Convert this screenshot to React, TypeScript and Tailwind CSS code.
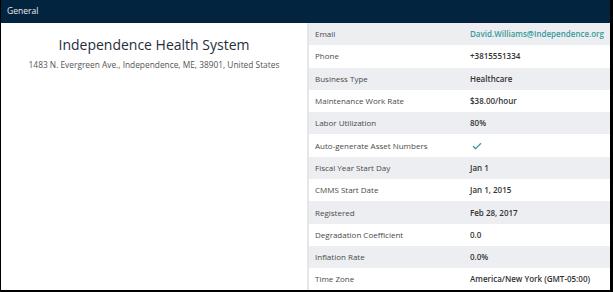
const rows: { label: string; value: string; kind?: 'email' | 'check' }[] = [
  { label: 'Email', value: 'David.Williams@Independence.org', kind: 'email' },
  { label: 'Phone', value: '+3815551334' },
  { label: 'Business Type', value: 'Healthcare' },
  { label: 'Maintenance Work Rate', value: '$38.00/hour' },
  { label: 'Labor Utilization', value: '80%' },
  { label: 'Auto-generate Asset Numbers', value: '', kind: 'check' },
  { label: 'Fiscal Year Start Day', value: 'Jan 1' },
  { label: 'CMMS Start Date', value: 'Jan 1, 2015' },
  { label: 'Registered', value: 'Feb 28, 2017' },
  { label: 'Degradation Coefficient', value: '0.0' },
  { label: 'Inflation Rate', value: '0.0%' },
  { label: 'Time Zone', value: 'America/New York (GMT-05:00)' },
];

export default function App() {
  return (
    <div
      className="w-[613px] h-[292px] bg-white border-l border-r-[3px] border-b-2 border-black flex flex-col overflow-hidden"
      style={{ fontFamily: '"Open Sans", sans-serif' }}
    >
      <div className="h-[23px] shrink-0 bg-[#03243f] text-[#e8edf2] text-[8.5px] flex items-center px-[6px]">
        General
      </div>
      <div className="flex flex-1 border-b border-[#d4d4d4]">
        <div className="w-[306px] flex flex-col items-center pt-[13px]">
          <div className="text-[14px] text-[#1f2d3d] leading-tight">Independence Health System</div>
          <div className="text-[8.35px] text-[#555] mt-[5px]">
            1483 N. Evergreen Ave., Independence, ME, 38901, United States
          </div>
        </div>
        <div className="w-[2px] bg-[#e4e6ea]" />
        <div className="flex-1 flex flex-col">
          {rows.map((r, i) => (
            <div
              key={r.label}
              className={`h-[22.3px] flex items-center text-[8px] ${i % 2 === 0 ? 'bg-[#eceef1]' : 'bg-white'}`}
            >
              <div className="w-[161px] pl-[6px] text-[#4a4a4a]">{r.label}</div>
              <div className="flex-1 font-semibold text-[#333]">
                {r.kind === 'email' ? (
                  <span className="text-[#3a9a9a]">{r.value}</span>
                ) : r.kind === 'check' ? (
                  <svg width="10" height="8" viewBox="0 0 10 8" fill="none" className="ml-[2px]">
                    <path d="M1 4.2 L3.6 6.6 L9 1.2" stroke="#3a9a9a" strokeWidth="1.3" />
                  </svg>
                ) : (
                  r.value
                )}
              </div>
            </div>
          ))}
        </div>
      </div>
    </div>
  );
}
